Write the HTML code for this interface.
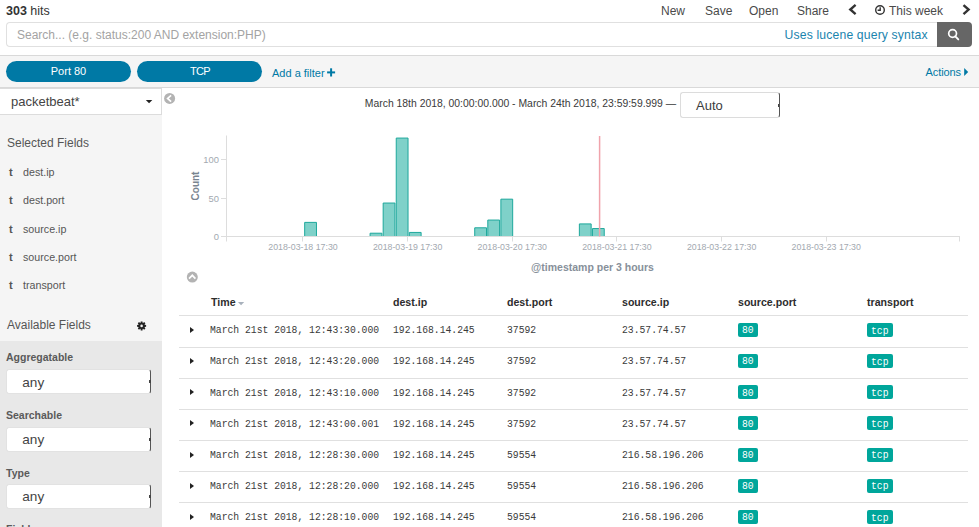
<!DOCTYPE html><html><head><meta charset="utf-8"><style>
*{box-sizing:border-box;margin:0;padding:0}
html,body{width:979px;height:527px;overflow:hidden;background:#fff}
body{font-family:"Liberation Sans",sans-serif;color:#3f3f3f;position:relative}
.a{position:absolute;white-space:nowrap}
#hits{left:6px;top:3.8px;font-size:12.5px;color:#333}
.menu{top:3.7px;font-size:12px;color:#4a4a4a}
#search{left:6px;top:22px;width:931px;height:24.5px;border:1px solid #e0e0e0;border-right:none;border-radius:4px 0 0 4px;background:#fff}
#ph{left:17px;top:27.6px;font-size:12px;color:#a3a3a3}
#lucene{left:784.6px;top:28px;font-size:12.2px;letter-spacing:0.15px;color:#1a84ae}
#sbtn{left:937px;top:22px;width:35px;height:24.5px;background:#666;border-radius:0 4px 4px 0}
#fbar{left:0;top:55px;width:979px;height:33px;background:#f5f5f5;border-top:1px solid #d9d9d9;border-bottom:1px solid #d9d9d9}
.pill{top:61px;height:21px;width:125px;border-radius:11px;background:#0079a5;color:#fff;font-size:11px;text-align:center;line-height:21px}
#addf{left:272px;top:66.8px;font-size:11px;color:#0079a5}
#actions{left:925.6px;top:66.2px;font-size:11px;letter-spacing:-0.1px;color:#0079a5}
#side{left:0;top:88px;width:162px;height:439px;background:#f5f5f5}
#idx{left:0;top:88px;width:162px;height:27px;background:#fff;border:1px solid #dcdcdc;border-left:none}
#idxt{left:11px;top:94.3px;font-size:13px;color:#444}
.sh{font-size:12px;color:#555}
.fld{font-size:10.7px;color:#555}
.ft{font-size:11px;font-weight:bold;color:#555}
#gray{left:0;top:341px;width:162px;height:186px;background:#e8e8e8}
.lab{font-size:10.5px;font-weight:bold;color:#5a5a5a}
.sel{width:145px;height:25px;background:#fff;border-radius:3px;border:1px solid #e2e2e2;border-right:1.6px solid #555}
.notch{position:absolute;width:1.2px;height:3px;background:#444}
.selt{font-size:13.6px;color:#444}
#range{left:364.8px;top:98.2px;font-size:10.4px;color:#3a3a3a}
#auto{left:680px;top:92px;width:100px;height:26px;border:1px solid #dcdcdc;border-right:1.5px solid #555;border-radius:3px;background:#fff}
#autot{left:696px;top:98px;font-size:13px;color:#3c3c3c}
.th{font-size:10.6px;font-weight:bold;color:#2d2d2d;top:296.3px}
.rl{position:absolute;left:179px;width:789px;height:1px;background:#e0e0e0}
.td{position:absolute;font-family:"Liberation Mono",monospace;font-size:11.3px;transform:scaleX(0.86);transform-origin:0 0;color:#3a3a3a;white-space:nowrap}
.badge{position:absolute;height:14px;background:#00a69b;border-radius:2px}
.bt{position:absolute;font-family:"Liberation Mono",monospace;font-size:11.3px;transform:scaleX(0.86);transform-origin:0 0;color:#fff;white-space:nowrap}
.arr{position:absolute;left:190px;width:0;height:0;border-left:4px solid #222;border-top:3px solid transparent;border-bottom:3px solid transparent}
svg{position:absolute;left:0;top:0}
.tick{font-size:9.4px;fill:#a3a9b0;font-family:"Liberation Sans",sans-serif}
</style></head><body>
<div class="a" id="hits"><b>303</b> hits</div>
<div class="a menu" style="left:661px">New</div>
<div class="a menu" style="left:705px">Save</div>
<div class="a menu" style="left:749px">Open</div>
<div class="a menu" style="left:797px">Share</div>
<div class="a menu" style="left:889px">This week</div>
<div class="a" id="search"></div>
<div class="a" id="ph">Search... (e.g. status:200 AND extension:PHP)</div>
<div class="a" id="lucene">Uses lucene query syntax</div>
<div class="a" id="sbtn"></div>
<div class="a" id="fbar"></div>
<div class="a pill" style="left:6px">Port 80</div>
<div class="a pill" style="left:137px;letter-spacing:-0.7px;padding-left:0.7px">TCP</div>
<div class="a" id="addf">Add a filter</div>
<div class="a" id="actions">Actions</div>
<div class="a" id="side"></div>
<div class="a" id="idx"></div>
<div class="a" id="idxt">packetbeat*</div>
<div class="a sh" style="left:7px;top:135.5px">Selected Fields</div>
<div class="a ft" style="left:9px;top:166.0px">t</div><div class="a fld" style="left:23px;top:166.0px">dest.ip</div>
<div class="a ft" style="left:9px;top:194.3px">t</div><div class="a fld" style="left:23px;top:194.3px">dest.port</div>
<div class="a ft" style="left:9px;top:222.6px">t</div><div class="a fld" style="left:23px;top:222.6px">source.ip</div>
<div class="a ft" style="left:9px;top:250.9px">t</div><div class="a fld" style="left:23px;top:250.9px">source.port</div>
<div class="a ft" style="left:9px;top:279.2px">t</div><div class="a fld" style="left:23px;top:279.2px">transport</div>
<div class="a sh" style="left:7px;top:318px">Available Fields</div>
<div class="a" id="gray"></div>
<div class="a lab" style="left:6px;top:351px">Aggregatable</div>
<div class="a sel" style="left:6px;top:369.4px"></div><div class="notch" style="left:149.4px;top:380.4px"></div><div class="a selt" style="left:22.3px;top:374.59999999999997px">any</div>
<div class="a lab" style="left:6px;top:409px">Searchable</div>
<div class="a sel" style="left:6px;top:426.7px"></div><div class="notch" style="left:149.4px;top:437.7px"></div><div class="a selt" style="left:22.3px;top:431.9px">any</div>
<div class="a lab" style="left:6px;top:466.5px">Type</div>
<div class="a sel" style="left:6px;top:484.2px"></div><div class="notch" style="left:149.4px;top:495.2px"></div><div class="a selt" style="left:22.3px;top:489.4px">any</div>
<div class="a lab" style="left:6px;top:523.2px">Fields</div>
<div class="a" id="range">March 18th 2018, 00:00:00.000 - March 24th 2018, 23:59:59.999 —</div>
<div class="a" id="auto"></div>
<div class="a" id="autot">Auto</div><div class="notch" style="left:777.6px;top:103.5px"></div>
<svg width="979" height="527" viewBox="0 0 979 527"><line x1="226.5" y1="135.5" x2="226.5" y2="241.5" stroke="#ddd" stroke-width="1"/><line x1="226" y1="236.5" x2="960" y2="236.5" stroke="#ddd" stroke-width="1"/><line x1="221" y1="236.5" x2="226" y2="236.5" stroke="#ddd"/><text class="tick" x="219" y="239.7" text-anchor="end">0</text><line x1="221" y1="198.5" x2="226" y2="198.5" stroke="#ddd"/><text class="tick" x="219" y="201.7" text-anchor="end">50</text><line x1="221" y1="159.5" x2="226" y2="159.5" stroke="#ddd"/><text class="tick" x="219" y="162.7" text-anchor="end">100</text><line x1="302.5" y1="236" x2="302.5" y2="241.5" stroke="#ddd"/><text class="tick" x="268.3" y="250.0" textLength="69.4" lengthAdjust="spacingAndGlyphs" style="font-size:9.9px">2018-03-18 17:30</text><line x1="407.5" y1="236" x2="407.5" y2="241.5" stroke="#ddd"/><text class="tick" x="372.9" y="250.0" textLength="69.4" lengthAdjust="spacingAndGlyphs" style="font-size:9.9px">2018-03-19 17:30</text><line x1="512.5" y1="236" x2="512.5" y2="241.5" stroke="#ddd"/><text class="tick" x="477.6" y="250.0" textLength="69.4" lengthAdjust="spacingAndGlyphs" style="font-size:9.9px">2018-03-20 17:30</text><line x1="616.5" y1="236" x2="616.5" y2="241.5" stroke="#ddd"/><text class="tick" x="582.2" y="250.0" textLength="69.4" lengthAdjust="spacingAndGlyphs" style="font-size:9.9px">2018-03-21 17:30</text><line x1="721.5" y1="236" x2="721.5" y2="241.5" stroke="#ddd"/><text class="tick" x="686.9" y="250.0" textLength="69.4" lengthAdjust="spacingAndGlyphs" style="font-size:9.9px">2018-03-22 17:30</text><line x1="826.5" y1="236" x2="826.5" y2="241.5" stroke="#ddd"/><text class="tick" x="791.5" y="250.0" textLength="69.4" lengthAdjust="spacingAndGlyphs" style="font-size:9.9px">2018-03-23 17:30</text><line x1="959.5" y1="236" x2="959.5" y2="241.5" stroke="#ddd"/><rect x="304.68" y="222.38" width="11.8" height="13.62" fill="#7fd1c9"/><path d="M304.68,236.00 V222.38 H316.48 V236" fill="none" stroke="#1ea89c" stroke-width="1"/><rect x="370.08" y="233.21" width="11.8" height="2.79" fill="#7fd1c9"/><path d="M370.08,236.00 V233.21 H381.88 V236" fill="none" stroke="#1ea89c" stroke-width="1"/><rect x="383.16" y="203.04" width="11.8" height="32.96" fill="#7fd1c9"/><path d="M383.16,236.00 V203.04 H394.96 V236" fill="none" stroke="#1ea89c" stroke-width="1"/><rect x="396.24" y="138.07" width="11.8" height="97.93" fill="#7fd1c9"/><path d="M396.24,236.00 V138.07 H408.04 V236" fill="none" stroke="#1ea89c" stroke-width="1"/><rect x="409.32" y="232.43" width="11.8" height="3.57" fill="#7fd1c9"/><path d="M409.32,236.00 V232.43 H421.12 V236" fill="none" stroke="#1ea89c" stroke-width="1"/><rect x="474.72" y="227.79" width="11.8" height="8.21" fill="#7fd1c9"/><path d="M474.72,236.00 V227.79 H486.52 V236" fill="none" stroke="#1ea89c" stroke-width="1"/><rect x="487.80" y="220.06" width="11.8" height="15.94" fill="#7fd1c9"/><path d="M487.80,236.00 V220.06 H499.60 V236" fill="none" stroke="#1ea89c" stroke-width="1"/><rect x="500.88" y="199.17" width="11.8" height="36.83" fill="#7fd1c9"/><path d="M500.88,236.00 V199.17 H512.68 V236" fill="none" stroke="#1ea89c" stroke-width="1"/><rect x="579.36" y="223.92" width="11.8" height="12.08" fill="#7fd1c9"/><path d="M579.36,236.00 V223.92 H591.16 V236" fill="none" stroke="#1ea89c" stroke-width="1"/><rect x="592.44" y="228.56" width="11.8" height="7.44" fill="#7fd1c9"/><path d="M592.44,236.00 V228.56 H604.24 V236" fill="none" stroke="#1ea89c" stroke-width="1"/><line x1="599.6" y1="136" x2="599.6" y2="236.5" stroke="#f0a3ab" stroke-width="1.5"/><text x="199" y="186" transform="rotate(-90 199 186)" text-anchor="middle" style="font-size:10px;font-weight:bold;fill:#7a8590;font-family:Liberation Sans">Count</text><text x="592.5" y="271" text-anchor="middle" style="font-size:10.5px;font-weight:bold;fill:#87909a;font-family:Liberation Sans">@timestamp per 3 hours</text></svg>
<div class="a th" style="left:211px">Time</div>
<div class="a th" style="left:393px">dest.ip</div>
<div class="a th" style="left:507px">dest.port</div>
<div class="a th" style="left:622px">source.ip</div>
<div class="a th" style="left:738px">source.port</div>
<div class="a th" style="left:867px">transport</div>
<div class="rl" style="top:315.00px"></div>
<div class="rl" style="top:347.00px"></div>
<div class="rl" style="top:378.00px"></div>
<div class="rl" style="top:409.00px"></div>
<div class="rl" style="top:440.00px"></div>
<div class="rl" style="top:471.00px"></div>
<div class="rl" style="top:502.00px"></div>
<div class="arr" style="top:327.00px"></div>
<div class="td" style="left:210px;top:324.30px">March 21st 2018, 12:43:30.000</div>
<div class="td" style="left:393px;top:324.30px">192.168.14.245</div>
<div class="td" style="left:507px;top:324.30px">37592</div>
<div class="td" style="left:622px;top:324.30px">23.57.74.57</div>
<div class="badge" style="left:738px;width:20px;top:323.00px"></div><div class="bt" style="left:742.4px;top:324.30px">80</div>
<div class="badge" style="left:867px;width:25.5px;top:323.00px"></div><div class="bt" style="left:871.2px;top:324.80px">tcp</div>
<div class="arr" style="top:358.15px"></div>
<div class="td" style="left:210px;top:355.42px">March 21st 2018, 12:43:20.000</div>
<div class="td" style="left:393px;top:355.42px">192.168.14.245</div>
<div class="td" style="left:507px;top:355.42px">37592</div>
<div class="td" style="left:622px;top:355.42px">23.57.74.57</div>
<div class="badge" style="left:738px;width:20px;top:354.15px"></div><div class="bt" style="left:742.4px;top:355.42px">80</div>
<div class="badge" style="left:867px;width:25.5px;top:354.15px"></div><div class="bt" style="left:871.2px;top:355.92px">tcp</div>
<div class="arr" style="top:389.30px"></div>
<div class="td" style="left:210px;top:386.54px">March 21st 2018, 12:43:10.000</div>
<div class="td" style="left:393px;top:386.54px">192.168.14.245</div>
<div class="td" style="left:507px;top:386.54px">37592</div>
<div class="td" style="left:622px;top:386.54px">23.57.74.57</div>
<div class="badge" style="left:738px;width:20px;top:385.30px"></div><div class="bt" style="left:742.4px;top:386.54px">80</div>
<div class="badge" style="left:867px;width:25.5px;top:385.30px"></div><div class="bt" style="left:871.2px;top:387.04px">tcp</div>
<div class="arr" style="top:420.45px"></div>
<div class="td" style="left:210px;top:417.66px">March 21st 2018, 12:43:00.001</div>
<div class="td" style="left:393px;top:417.66px">192.168.14.245</div>
<div class="td" style="left:507px;top:417.66px">37592</div>
<div class="td" style="left:622px;top:417.66px">23.57.74.57</div>
<div class="badge" style="left:738px;width:20px;top:416.45px"></div><div class="bt" style="left:742.4px;top:417.66px">80</div>
<div class="badge" style="left:867px;width:25.5px;top:416.45px"></div><div class="bt" style="left:871.2px;top:418.16px">tcp</div>
<div class="arr" style="top:451.60px"></div>
<div class="td" style="left:210px;top:448.78px">March 21st 2018, 12:28:30.000</div>
<div class="td" style="left:393px;top:448.78px">192.168.14.245</div>
<div class="td" style="left:507px;top:448.78px">59554</div>
<div class="td" style="left:622px;top:448.78px">216.58.196.206</div>
<div class="badge" style="left:738px;width:20px;top:447.60px"></div><div class="bt" style="left:742.4px;top:448.78px">80</div>
<div class="badge" style="left:867px;width:25.5px;top:447.60px"></div><div class="bt" style="left:871.2px;top:449.28px">tcp</div>
<div class="arr" style="top:482.75px"></div>
<div class="td" style="left:210px;top:479.90px">March 21st 2018, 12:28:20.000</div>
<div class="td" style="left:393px;top:479.90px">192.168.14.245</div>
<div class="td" style="left:507px;top:479.90px">59554</div>
<div class="td" style="left:622px;top:479.90px">216.58.196.206</div>
<div class="badge" style="left:738px;width:20px;top:478.75px"></div><div class="bt" style="left:742.4px;top:479.90px">80</div>
<div class="badge" style="left:867px;width:25.5px;top:478.75px"></div><div class="bt" style="left:871.2px;top:480.40px">tcp</div>
<div class="arr" style="top:513.90px"></div>
<div class="td" style="left:210px;top:511.02px">March 21st 2018, 12:28:10.000</div>
<div class="td" style="left:393px;top:511.02px">192.168.14.245</div>
<div class="td" style="left:507px;top:511.02px">59554</div>
<div class="td" style="left:622px;top:511.02px">216.58.196.206</div>
<div class="badge" style="left:738px;width:20px;top:509.90px"></div><div class="bt" style="left:742.4px;top:511.02px">80</div>
<div class="badge" style="left:867px;width:25.5px;top:509.90px"></div><div class="bt" style="left:871.2px;top:511.52px">tcp</div>
<svg width="979" height="527" viewBox="0 0 979 527" style="position:absolute;left:0;top:0"><polyline points="855.6,4.9 850.3,9.5 855.6,14.1" fill="none" stroke="#333" stroke-width="2.4"/><polyline points="963.5,5.1 968.6,9.6 963.5,14.2" fill="none" stroke="#333" stroke-width="2.4"/><circle cx="880" cy="10" r="4.3" fill="none" stroke="#333" stroke-width="1.4"/><polyline points="880.2,7.2 880.2,10.3 877.6,10.3" fill="none" stroke="#333" stroke-width="1.4"/><circle cx="952.6" cy="33.5" r="3.9" fill="none" stroke="#fff" stroke-width="1.7"/><line x1="955.3" y1="36.3" x2="958.3" y2="39.4" stroke="#fff" stroke-width="1.9" stroke-linecap="round"/><rect x="327.1" y="71.4" width="8" height="2" fill="#0079a5"/><rect x="330.1" y="68.3" width="2" height="8.2" fill="#0079a5"/><polygon points="964.2,67.9 968.2,71.9 964.2,75.9" fill="#0079a5"/><polygon points="145.8,99.9 152.3,99.9 149.05,103.2" fill="#222"/><circle cx="169.6" cy="98.4" r="5.5" fill="#b3b3b3"/><polyline points="171.1,95.3 167.6,98.4 171.1,101.6" fill="none" stroke="#fff" stroke-width="1.7"/><circle cx="192.3" cy="277.1" r="5.5" fill="#b3b3b3"/><polyline points="189,278.6 192.3,275.3 195.4,278.6" fill="none" stroke="#fff" stroke-width="1.7"/><polygon points="237.9,302 244.2,302 241.05,305.2" fill="#a8b1bc"/><polygon points="140.55,322.77 140.72,321.38 142.48,321.38 142.65,322.77 143.07,322.95 144.17,322.09 145.41,323.33 144.55,324.43 144.73,324.85 146.12,325.02 146.12,326.78 144.73,326.95 144.55,327.37 145.41,328.47 144.17,329.71 143.07,328.85 142.65,329.03 142.48,330.42 140.72,330.42 140.55,329.03 140.13,328.85 139.03,329.71 137.79,328.47 138.65,327.37 138.47,326.95 137.08,326.78 137.08,325.02 138.47,324.85 138.65,324.43 137.79,323.33 139.03,322.09 140.13,322.95" fill="#222"/><circle cx="141.6" cy="325.9" r="1.3" fill="#f5f5f5"/></svg>
</body></html>
